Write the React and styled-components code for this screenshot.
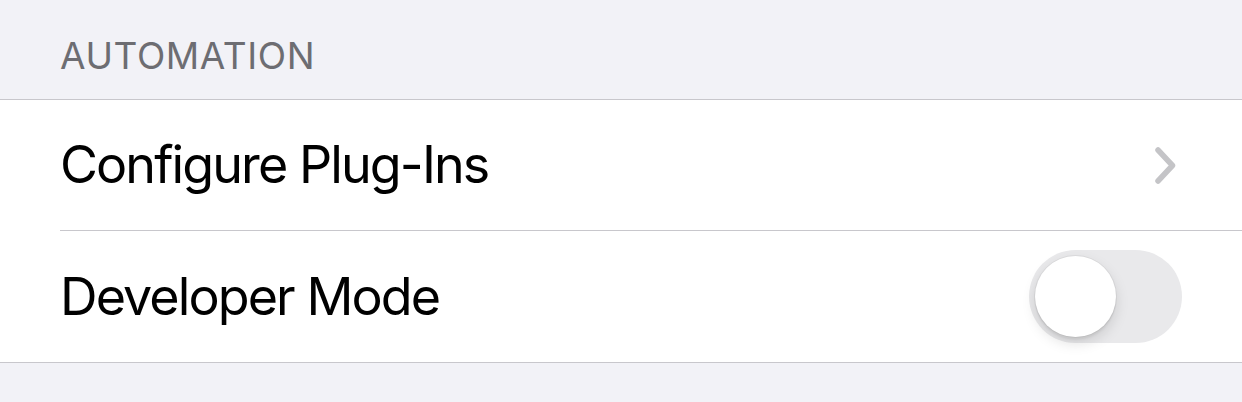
import React from "react"
import styled, { createGlobalStyle } from "styled-components"

const GlobalStyle = createGlobalStyle`
  html, body {
    margin: 0;
    padding: 0;
    background: #f2f2f7;
    font-family: Inter, "Liberation Sans", sans-serif;
    -webkit-font-smoothing: antialiased;
  }
`

const Page = styled.div`
  width: 1242px;
  height: 402px;
  background: #f2f2f7;
  overflow: hidden;
`

const SectionHeader = styled.div`
  height: 99px;
  box-sizing: border-box;
  padding: 34px 0 0 60px;
  font-size: 37px;
  line-height: 44px;
  color: #6d6d72;
  letter-spacing: 0.6px;
`

const Group = styled.div`
  background: #fff;
  border-top: 1px solid #c8c7cc;
  border-bottom: 1px solid #c8c7cc;
`

const Row = styled.div`
  height: ${props => props.height}px;
  display: flex;
  align-items: center;
  padding: 0 ${props => props.padRight}px 0 60px;
  box-sizing: border-box;
`

const Label = styled.div`
  flex: 1;
  font-size: 52px;
  line-height: 60px;
  color: #000;
  letter-spacing: -1.9px;
`

const Separator = styled.div`
  height: 1px;
  margin-left: 60px;
  background: #c8c7cc;
`

const SwitchTrack = styled.div`
  width: 153px;
  height: 93px;
  box-sizing: border-box;
  padding: 6px;
  border-radius: 47px;
  background: ${props => (props.on ? "#34c759" : "#e9e9eb")};
  display: flex;
  justify-content: ${props => (props.on ? "flex-end" : "flex-start")};
`

const SwitchKnob = styled.div`
  width: 81px;
  height: 81px;
  border-radius: 50%;
  background: #fff;
  box-shadow: 0 6px 14px rgba(0, 0, 0, 0.13), 0 0 0 1px rgba(0, 0, 0, 0.05),
    0 3px 2px rgba(0, 0, 0, 0.05);
`

const Chevron = () => (
  <svg width="21" height="37" viewBox="0 0 21 37">
    <path
      d="M3 3 L17.5 18.5 L3 34"
      fill="none"
      stroke="#c4c4c7"
      strokeWidth="5.5"
      strokeLinecap="round"
      strokeLinejoin="round"
    />
  </svg>
)

const App = () => {
  return (
    <Page>
      <GlobalStyle />
      <SectionHeader>AUTOMATION</SectionHeader>
      <Group>
        <Row height={130} padRight={66}>
          <Label>Configure Plug-Ins</Label>
          <Chevron />
        </Row>
        <Separator />
        <Row height={131} padRight={60}>
          <Label>Developer Mode</Label>
          <SwitchTrack>
            <SwitchKnob />
          </SwitchTrack>
        </Row>
      </Group>
    </Page>
  )
}

export default App
